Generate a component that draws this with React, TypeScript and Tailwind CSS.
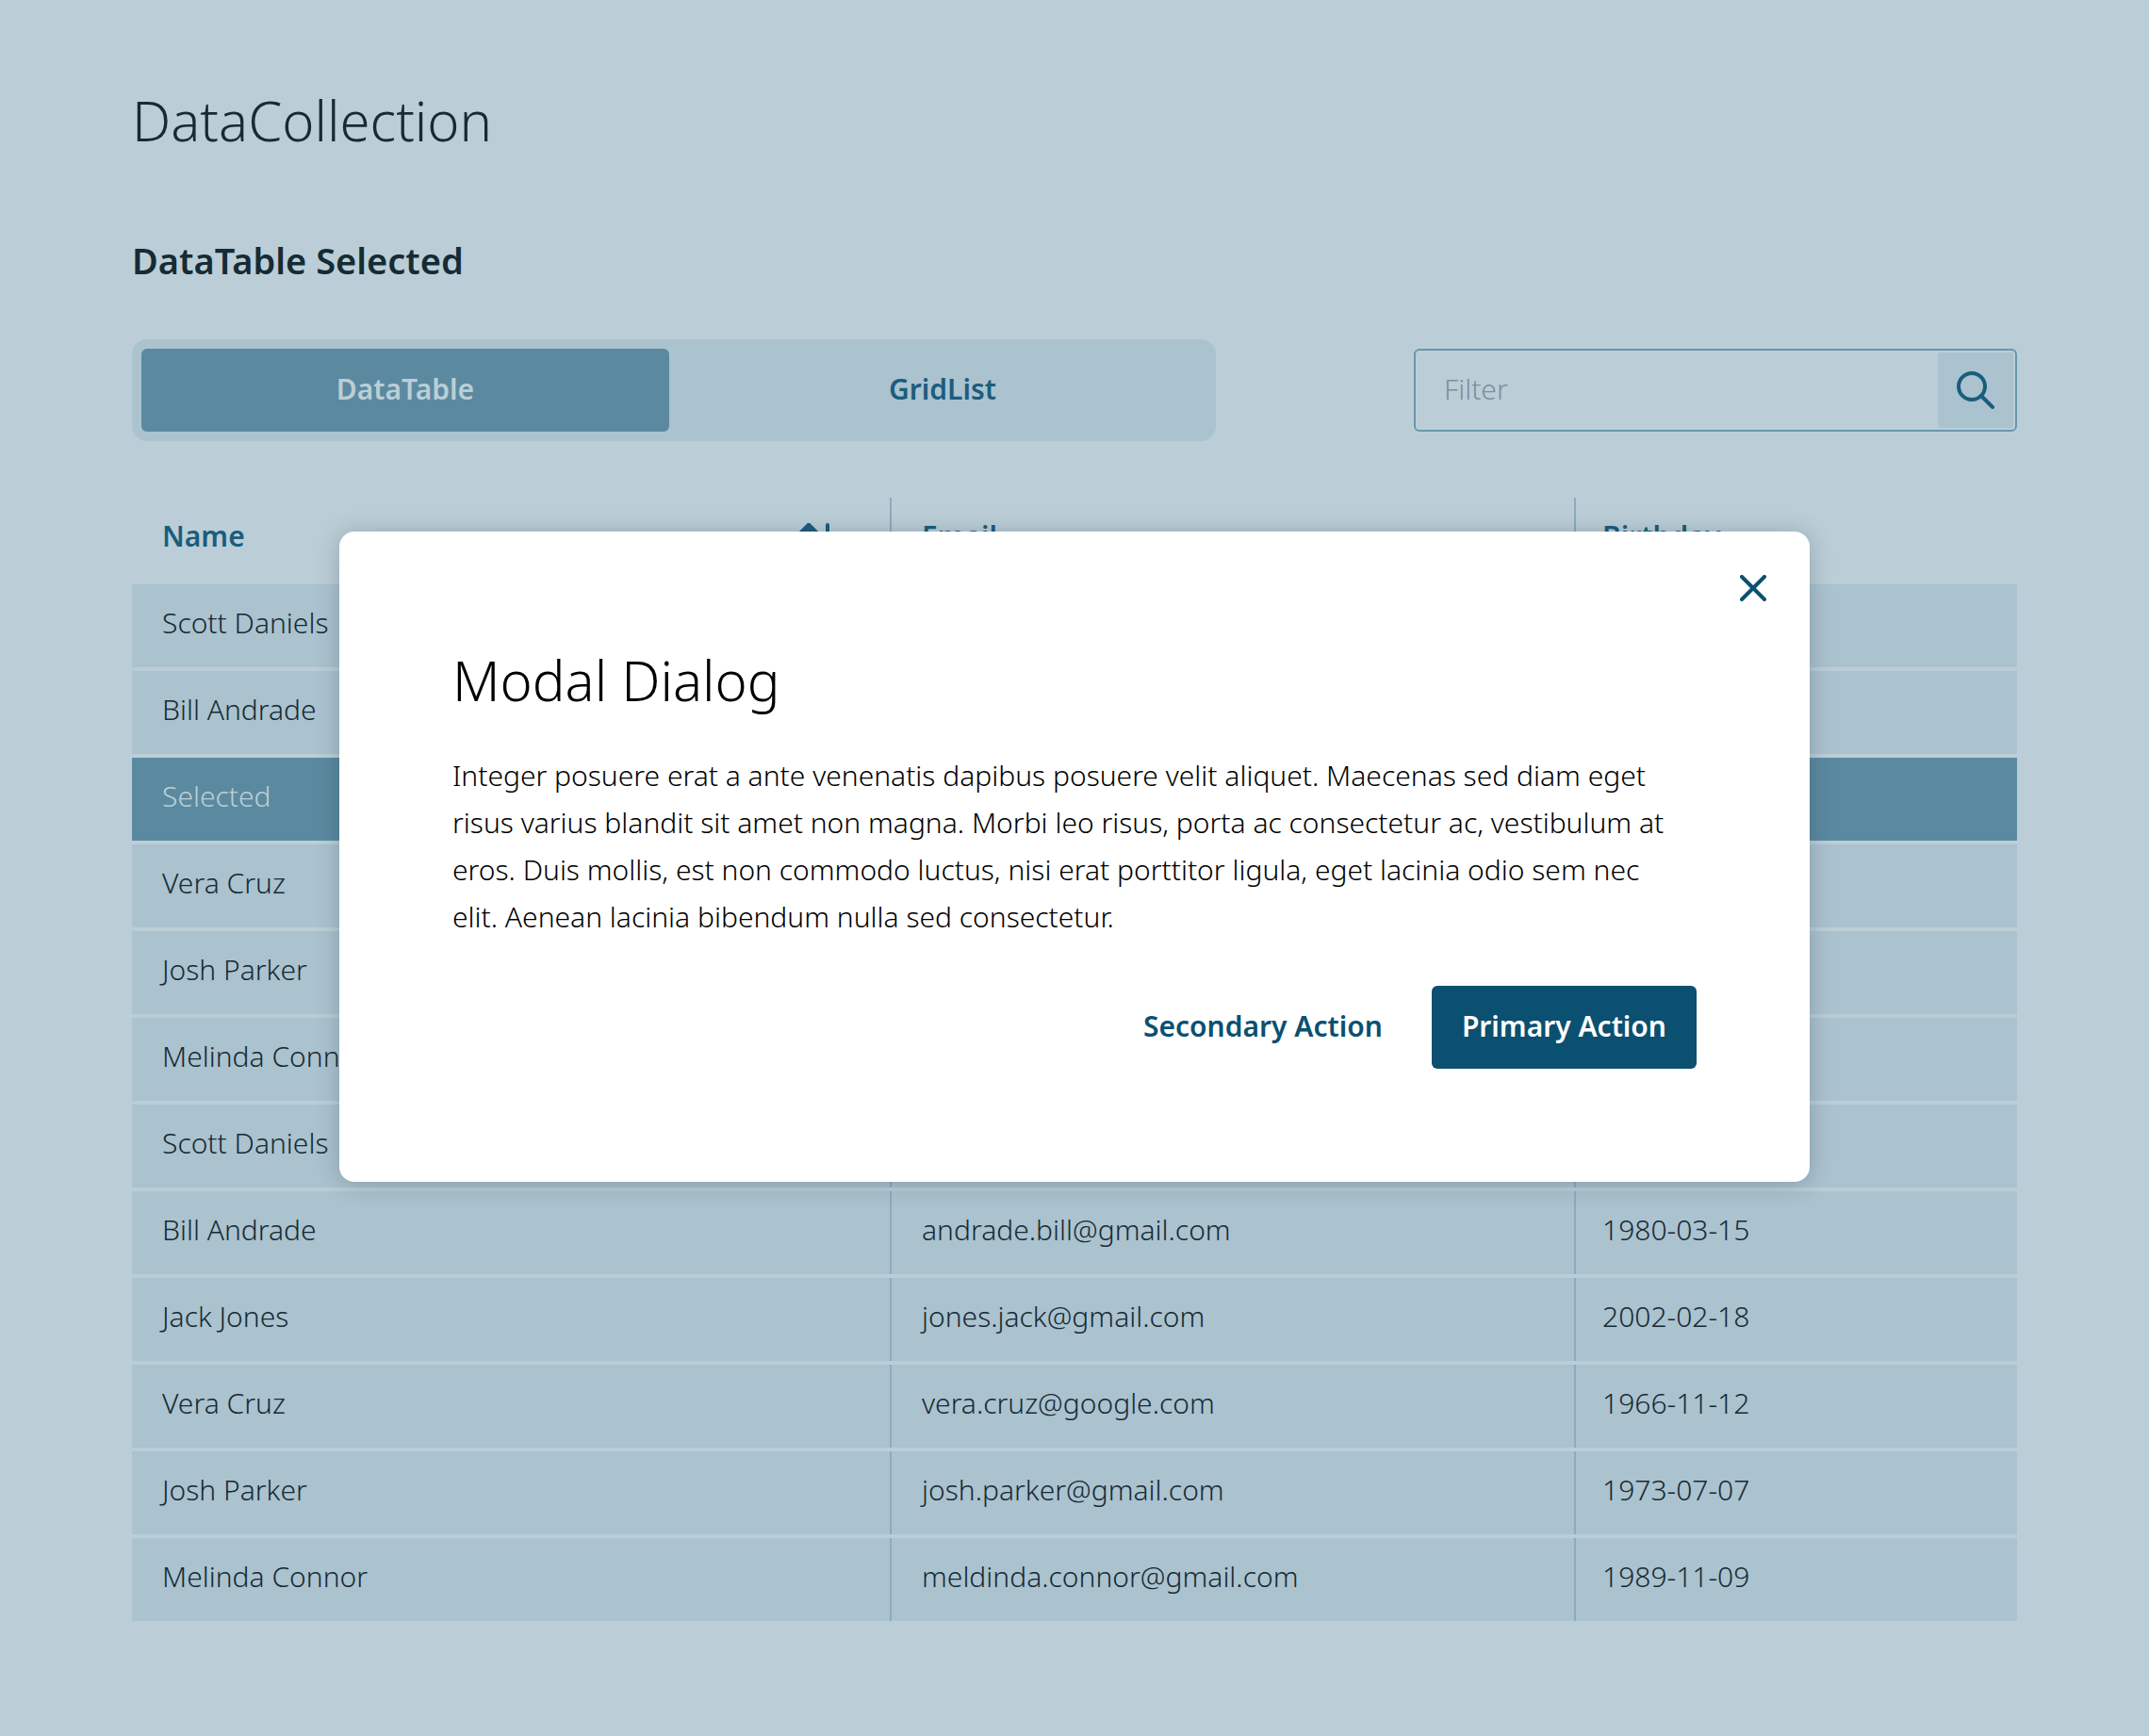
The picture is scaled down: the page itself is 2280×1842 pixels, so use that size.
import React from "react";

type Person = { name: string; email: string; birth: string; selected?: boolean };

const people: Person[] = [
  { name: "Scott Daniels", email: "scott.daniels@gmail.com", birth: "1985-06-21" },
  { name: "Bill Andrade", email: "andrade.bill@gmail.com", birth: "1980-03-15" },
  { name: "Selected", email: "jones.jack@gmail.com", birth: "2002-02-18", selected: true },
  { name: "Vera Cruz", email: "vera.cruz@google.com", birth: "1966-11-12" },
  { name: "Josh Parker", email: "josh.parker@gmail.com", birth: "1973-07-07" },
  { name: "Melinda Connor", email: "meldinda.connor@gmail.com", birth: "1989-11-09" },
  { name: "Scott Daniels", email: "scott.daniels@gmail.com", birth: "1985-06-21" },
  { name: "Bill Andrade", email: "andrade.bill@gmail.com", birth: "1980-03-15" },
  { name: "Jack Jones", email: "jones.jack@gmail.com", birth: "2002-02-18" },
  { name: "Vera Cruz", email: "vera.cruz@google.com", birth: "1966-11-12" },
  { name: "Josh Parker", email: "josh.parker@gmail.com", birth: "1973-07-07" },
  { name: "Melinda Connor", email: "meldinda.connor@gmail.com", birth: "1989-11-09" },
];

function SearchIcon() {
  return (
    <svg viewBox="0 0 40 40" className="size-10" fill="none" stroke="currentColor" strokeWidth="4" strokeLinecap="round" aria-hidden="true">
      <circle cx="16" cy="16" r="14" />
      <path d="M26 26 38 38" />
    </svg>
  );
}

function CloseIcon() {
  return (
    <svg viewBox="0 0 28 28" className="size-7" fill="none" stroke="currentColor" strokeWidth="4" strokeLinecap="round" aria-hidden="true">
      <path d="M2 2 26 26M26 2 2 26" />
    </svg>
  );
}

function SortIcon() {
  return (
    <svg viewBox="0 0 40 28" className="h-7 w-10" fill="none" stroke="currentColor" strokeWidth="4" strokeLinecap="round" strokeLinejoin="round" aria-hidden="true">
      <path d="M10 26V3M2 10 10 2l8 8M30 2v24M22 18l8 8 8-8" />
      <path d="M2 10 10 2l8 8z" fill="currentColor" />
    </svg>
  );
}

const divider = "border-r-2 border-[#8bacbc]";

function PeopleTable() {
  return (
    <table className="mt-14 w-full table-fixed border-separate border-spacing-x-0 border-spacing-y-1 text-left">
      <colgroup>
        <col className="w-[40.3%]" />
        <col className="w-[36.3%]" />
        <col />
      </colgroup>
      <thead className="text-[#1b5d7d]">
        <tr className="h-22">
          <th scope="col" aria-sort="ascending" className={`${divider} px-8 pb-1.5 font-semibold`}>
            <button type="button" className="flex w-full items-center justify-between pr-6">
              Name
              <SortIcon />
            </button>
          </th>
          <th scope="col" className={`${divider} px-8 pb-1.5 font-semibold`}>Email</th>
          <th scope="col" className="px-7 pb-1.5 font-semibold">Birthday</th>
        </tr>
      </thead>
      <tbody>
        {people.map((p, i) => (
          <tr key={i} aria-selected={!!p.selected} className={p.selected ? "h-22 bg-[#5b8aa0] text-[#bbced7]" : "h-22 bg-[#abc2cf]"}>
            <td className={`${divider} px-8 pb-1.5`}>{p.name}</td>
            <td className={`${divider} px-8 pb-1.5`}>{p.email}</td>
            <td className="px-7 pb-1.5">{p.birth}</td>
          </tr>
        ))}
      </tbody>
    </table>
  );
}

function Dialog() {
  return (
    <div className="absolute inset-0 flex items-center justify-center pb-6">
      <div
        role="dialog"
        aria-modal="true"
        aria-labelledby="dialog-title"
        className="relative w-[1560px] max-w-[90%] rounded-2xl bg-white p-30 text-black shadow-[0_2px_24px_rgba(22,43,52,0.25)]"
      >
        <button type="button" aria-label="Close" className="absolute top-8 right-8 p-3.5 text-[#0b5070]">
          <CloseIcon />
        </button>
        <h2 id="dialog-title" className="text-[58px] leading-19 font-light">Modal Dialog</h2>
        <p className="mt-[38px] pr-4 text-[30px] leading-[50px] font-light">
          Integer posuere erat a ante venenatis dapibus posuere velit aliquet. Maecenas sed diam eget risus varius
          blandit sit amet non magna. Morbi leo risus, porta ac consectetur ac, vestibulum at eros. Duis mollis, est
          non commodo luctus, nisi erat porttitor ligula, eget lacinia odio sem nec elit. Aenean lacinia bibendum
          nulla sed consectetur.
        </p>
        <div className="mt-12 flex justify-end gap-5 font-semibold">
          <button type="button" className="h-22 px-8 pb-0.5 text-[#0b5070]">Secondary Action</button>
          <button type="button" className="h-22 rounded-md bg-[#0b5070] px-8 pb-0.5 text-white">Primary Action</button>
        </div>
      </div>
    </div>
  );
}

export default function App() {
  return (
    <div className="relative min-h-screen bg-[#bbced7] font-['Noto_Sans',sans-serif] text-[30px] leading-10 font-light text-[#162b34]">
      <main className="px-35 pt-22 pb-28">
        <h1 className="text-[58px] leading-20 font-light">DataCollection</h1>
        <h2 className="mt-20 text-[38px] leading-14 font-semibold">DataTable Selected</h2>
        <div className="mt-14 flex items-center justify-between">
          <div role="tablist" className="flex w-[57.5%] gap-2.5 rounded-2xl bg-[#abc2cf] p-2.5 font-semibold">
            <button type="button" role="tab" aria-selected="true" className="h-22 flex-1 rounded-md bg-[#5b8aa0] pb-0.5 text-[#bbced7]">
              DataTable
            </button>
            <button type="button" role="tab" aria-selected="false" className="h-22 flex-1 pb-0.5 text-[#1b5d7d]">
              GridList
            </button>
          </div>
          <form className="flex h-22 w-[32%] rounded-md border-2 border-[#6997ab] p-0.5">
            <input
              type="text"
              aria-label="Filter"
              placeholder="Filter"
              className="min-w-0 flex-1 bg-transparent pb-0.5 pl-7 font-light outline-none placeholder:text-[#7b9099]"
            />
            <button type="button" aria-label="Search" className="flex w-20 items-center justify-center rounded-xs bg-[#abc2cf] text-[#1b5d7d]">
              <SearchIcon />
            </button>
          </form>
        </div>
        <PeopleTable />
      </main>
      <Dialog />
    </div>
  );
}
